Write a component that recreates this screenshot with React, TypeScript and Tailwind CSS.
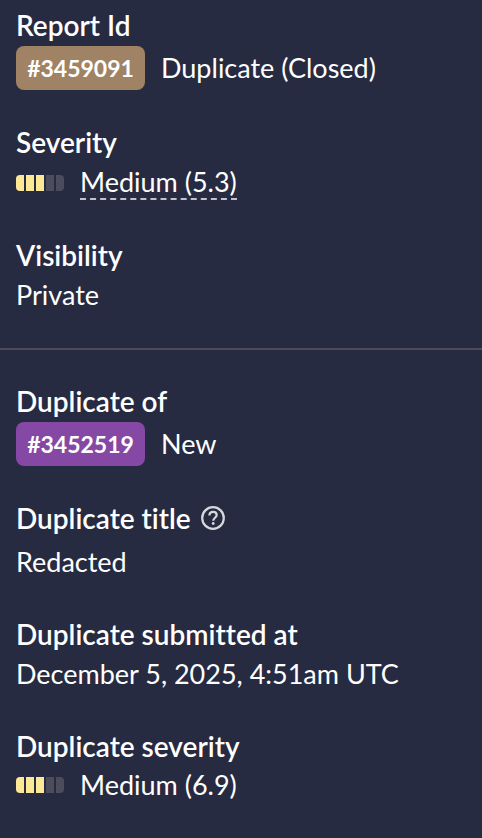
import type { ReactNode } from "react";

function Field({ label, help, children }: { label: string; help?: boolean; children: ReactNode }) {
  return (
    <div>
      <dt className="flex items-center gap-2.5 text-[28px] font-semibold">
        {label}
        {help && (
          <button type="button" aria-label="About the duplicate title" className="text-[#d5d8dd]">
            <svg width="24" height="24" viewBox="0 0 24 24" fill="none" stroke="currentColor" strokeWidth="2.2">
              <circle cx="12" cy="12" r="10.8" />
              <path d="M8.4 9.6C8.4 7.3 10 5.9 12.1 5.9c2 0 3.6 1.3 3.6 3.2 0 2.5-3.5 2.8-3.5 5.6" />
              <circle cx="12.2" cy="17.5" r="1.4" fill="currentColor" stroke="none" />
            </svg>
          </button>
        )}
      </dt>
      <dd className={help ? "mt-1" : ""}>{children}</dd>
    </div>
  );
}

function ReportLink({ id, color, state }: { id: string; color: string; state: string }) {
  return (
    <div className="flex items-center gap-4 pt-px">
      <a href={`#${id}`} className={`flex h-11 w-[129px] items-center justify-center rounded-lg text-[23px] font-bold ${color}`}>
        #{id}
      </a>
      <span>{state}</span>
    </div>
  );
}

function Severity({ text, explained }: { text: string; explained?: boolean }) {
  return (
    <div className={`flex items-center gap-4 ${explained ? "h-[41px] pt-px" : "h-[38px]"}`}>
      <div className="flex h-4 w-12 gap-0.5 overflow-hidden rounded" aria-hidden="true">
        {[0, 1, 2, 3, 4].map((n) => (
          <span key={n} className={`w-2 shrink-0 ${n < 3 ? "bg-[#fde995]" : "bg-[#4c4c5c]"}`} />
        ))}
      </div>
      {explained ? (
        <button type="button" className="self-start border-b-2 border-dashed border-[#c0c3cc] pt-[3px] leading-8">
          {text}
        </button>
      ) : (
        <span>{text}</span>
      )}
    </div>
  );
}

export default function App() {
  return (
    <main className="min-h-screen bg-[#272b41] font-['Lato',sans-serif] text-[27px] leading-10 text-white [font-variant-ligatures:none]">
      <dl className="flex flex-col gap-8 border-b-2 border-[#4c4c5c] px-4 pt-[5px] pb-[33px]">
        <Field label="Report Id">
          <ReportLink id="3459091" color="bg-[#a08264]" state="Duplicate (Closed)" />
        </Field>
        <Field label="Severity">
          <Severity text="Medium (5.3)" explained />
        </Field>
        <Field label="Visibility">Private</Field>
      </dl>
      <dl className="flex flex-col gap-8 px-4 pt-[31px]">
        <Field label="Duplicate of">
          <ReportLink id="3452519" color="bg-[#8548a5]" state="New" />
        </Field>
        <Field label="Duplicate title" help>
          Redacted
        </Field>
        <Field label="Duplicate submitted at">December 5, 2025, 4:51am UTC</Field>
        <Field label="Duplicate severity">
          <Severity text="Medium (6.9)" />
        </Field>
      </dl>
    </main>
  );
}
